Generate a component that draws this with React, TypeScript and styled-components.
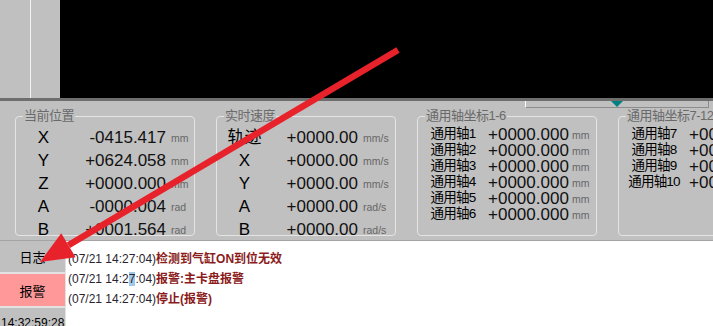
import { Fragment } from "react";
import styled, { createGlobalStyle } from "styled-components";

const GlobalStyle = createGlobalStyle`
  body {
    margin: 0;
    background: #c0c0c0;
  }
`;

type AxisRow = { label: string; value: string; unit: string };

const positionRows: AxisRow[] = [
  { label: "X", value: "-0415.417", unit: "mm" },
  { label: "Y", value: "+0624.058", unit: "mm" },
  { label: "Z", value: "+0000.000", unit: "mm" },
  { label: "A", value: "-0000.004", unit: "rad" },
  { label: "B", value: "+0001.564", unit: "rad" },
];

const speedRows: AxisRow[] = [
  { label: "轨迹", value: "+0000.00", unit: "mm/s" },
  { label: "X", value: "+0000.00", unit: "mm/s" },
  { label: "Y", value: "+0000.00", unit: "mm/s" },
  { label: "A", value: "+0000.00", unit: "rad/s" },
  { label: "B", value: "+0000.00", unit: "rad/s" },
];

const axisRows = (from: number, to: number): AxisRow[] =>
  Array.from({ length: to - from + 1 }, (_, i) => ({
    label: `通用轴${from + i}`,
    value: "+0000.000",
    unit: "mm",
  }));

const Page = styled.div`
  position: relative;
  width: 713px;
  height: 326px;
  overflow: hidden;
  display: flex;
  flex-direction: column;
  background: #c0c0c0;
  font-family: "Liberation Sans", "Noto Sans CJK SC", sans-serif;
  color: #111;
`;

const TopArea = styled.div`
  display: flex;
  height: 98px;
  flex-shrink: 0;
`;

const SideStrip = styled.div`
  width: 60px;
  background: #c0c0c0;
`;

const StripLine = styled.div`
  width: 30px;
  height: 100%;
  border-right: 1px solid #f4f4f4;
`;

const Viewport = styled.div`
  flex: 1;
  background: #000;
`;

const DividerBar = styled.div`
  height: 3px;
  flex-shrink: 0;
  background: #6e6e6e;
`;

const Panel = styled.div`
  height: 140px;
  flex-shrink: 0;
  box-sizing: border-box;
  display: flex;
  flex-direction: column;
  border-bottom: 1px solid #a4a4a4;
`;

const RulerRow = styled.div`
  height: 7px;
  padding-left: 525px;
`;

const Ruler = styled.div`
  width: 184px;
  height: 7px;
  box-sizing: border-box;
  display: flex;
  justify-content: center;
  border-left: 1px solid #ffffff;
  border-right: 1px solid #8c8c8c;
  border-bottom: 1px solid #8c8c8c;
`;

const Marker = styled.div`
  width: 0;
  height: 0;
  border-left: 6px solid transparent;
  border-right: 6px solid transparent;
  border-top: 6px solid #008080;
`;

const GroupRow = styled.div`
  display: flex;
  gap: 21px;
  padding-left: 15px;
  margin-top: 1px;
`;

const Group = styled.fieldset`
  flex-shrink: 0;
  width: 180px;
  height: 127px;
  box-sizing: border-box;
  margin: 0;
  padding: 0;
  min-width: 0;
  border: 1px solid #e4e4e4;
  border-radius: 4px;
`;

const GroupTitle = styled.legend`
  margin-left: 7px;
  padding: 0 1px;
  font-size: 13px;
  line-height: 14px;
  color: #6a6a6a;
  letter-spacing: -0.5px;
`;

const Rows = styled.div<{ $label: number; $value: number; $row: number }>`
  display: grid;
  grid-template-columns: ${(p) => p.$label}px ${(p) => p.$value}px auto;
  grid-auto-rows: ${(p) => p.$row}px;
  padding-top: 3px;
  white-space: nowrap;
`;

const Label = styled.div<{ $size: number }>`
  text-align: center;
  font-size: ${(p) => p.$size}px;
  letter-spacing: ${(p) => (p.$size < 15 ? "-0.8px" : "0")};
  line-height: 1;
  align-self: center;
  color: #000;
`;

const Value = styled.div`
  text-align: right;
  font-size: 17px;
  line-height: 1;
  align-self: center;
  color: #111;
`;

const Unit = styled.div`
  padding-left: 5px;
  font-size: 10.5px;
  line-height: 1;
  color: #666;
  align-self: center;
  padding-top: 2px;
`;

const Bottom = styled.div`
  flex: 1;
  display: flex;
  min-height: 0;
`;

const SideColumn = styled.div`
  width: 66px;
  box-sizing: border-box;
  padding-right: 1px;
  display: flex;
  flex-direction: column;
  gap: 2px;
  background: #e2e2e2;
`;

const SideButton = styled.div<{ $alert?: boolean; $h: number }>`
  height: ${(p) => p.$h}px;
  flex-shrink: 0;
  display: flex;
  align-items: center;
  justify-content: center;
  font-size: 13px;
  color: #000;
  background: ${(p) => (p.$alert ? "#ff9999" : "#c0c0c0")};
`;

const Clock = styled.div`
  flex: 1;
  background: #c0c0c0;
  padding: 8px 0 0 1px;
  font-size: 12px;
  color: #000;
  overflow: hidden;
`;

const LogArea = styled.div`
  flex: 1;
  background: #fff;
  padding: 8px 0 0 2px;
  font-size: 12px;
  line-height: 20px;
`;

const LogLine = styled.div`
  white-space: nowrap;
`;

const Stamp = styled.span`
  color: #2a2430;
`;

const Message = styled.span`
  color: #8b1c1c;
  font-weight: 700;
`;

const Caret = styled.span`
  background: #9fc8ec;
`;

const Overlay = styled.svg`
  position: absolute;
  left: 0;
  top: 0;
  pointer-events: none;
`;

const AxisGroup = ({
  title,
  rows,
  labelW,
  valueW,
  rowH,
  labelSize,
}: {
  title: string;
  rows: AxisRow[];
  labelW: number;
  valueW: number;
  rowH: number;
  labelSize: number;
}) => (
  <Group>
    <GroupTitle>{title}</GroupTitle>
    <Rows $label={labelW} $value={valueW} $row={rowH}>
      {rows.map((r) => (
        <Fragment key={r.label}>
          <Label $size={labelSize}>{r.label}</Label>
          <Value>{r.value}</Value>
          <Unit>{r.unit}</Unit>
        </Fragment>
      ))}
    </Rows>
  </Group>
);

// tip and tail of the red annotation arrow
const tip = { x: 40, y: 262 };
const tail = { x: 398, y: 50 };
const len = Math.hypot(tail.x - tip.x, tail.y - tip.y);
const ux = (tail.x - tip.x) / len;
const uy = (tail.y - tip.y) / len;
const headLen = 33;
const headHalf = 14;
const bx = tip.x + ux * headLen;
const by = tip.y + uy * headLen;

export default function App() {
  return (
    <>
      <GlobalStyle />
      <Page>
        <TopArea>
          <SideStrip>
            <StripLine />
          </SideStrip>
          <Viewport />
        </TopArea>
        <DividerBar />
        <Panel>
          <RulerRow>
            <Ruler>
              <Marker />
            </Ruler>
          </RulerRow>
          <GroupRow>
            <AxisGroup title="当前位置" rows={positionRows} labelW={55} valueW={95} rowH={23} labelSize={17} />
            <AxisGroup title="实时速度" rows={speedRows} labelW={55} valueW={86} rowH={23} labelSize={17} />
            <AxisGroup title="通用轴坐标1-6" rows={axisRows(1, 6)} labelW={70} valueW={79} rowH={16} labelSize={13.5} />
            <AxisGroup title="通用轴坐标7-12" rows={axisRows(7, 10)} labelW={70} valueW={79} rowH={16} labelSize={13.5} />
          </GroupRow>
        </Panel>
        <Bottom>
          <SideColumn>
            <SideButton $h={31}>日志</SideButton>
            <SideButton $h={32} $alert>
              报警
            </SideButton>
            <Clock>14:32:59:288</Clock>
          </SideColumn>
          <LogArea>
            <LogLine>
              <Stamp>(07/21 14:27:04)</Stamp>
              <Message>检测到气缸ON到位无效</Message>
            </LogLine>
            <LogLine>
              <Stamp>
                (07/21 14:2<Caret>7</Caret>:04)
              </Stamp>
              <Message>报警:主卡盘报警</Message>
            </LogLine>
            <LogLine>
              <Stamp>(07/21 14:27:04)</Stamp>
              <Message>停止(报警)</Message>
            </LogLine>
          </LogArea>
        </Bottom>
        <Overlay width={713} height={326} viewBox="0 0 713 326">
          <line x1={tail.x} y1={tail.y} x2={bx} y2={by} stroke="#e8222b" strokeWidth={6.5} />
          <polygon
            points={`${tip.x},${tip.y} ${bx - uy * headHalf},${by + ux * headHalf} ${bx + uy * headHalf},${by - ux * headHalf}`}
            fill="#e8222b"
          />
        </Overlay>
      </Page>
    </>
  );
}
